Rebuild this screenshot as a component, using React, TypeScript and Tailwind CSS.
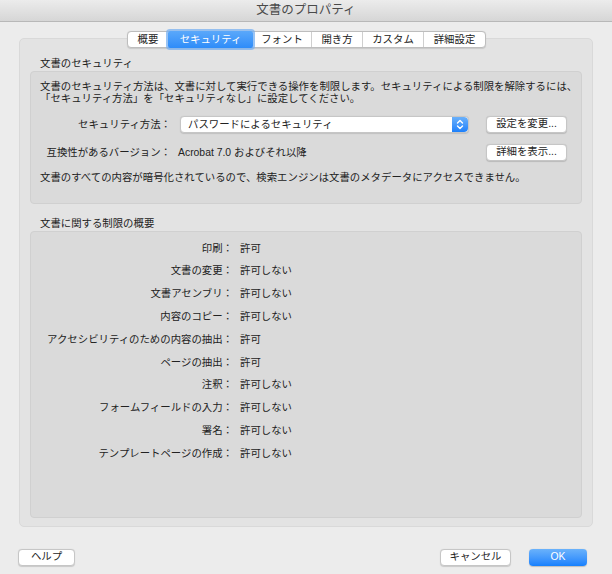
const font = { fontFamily: '"Liberation Sans", "Noto Sans CJK JP", sans-serif' };

const tabs = [
  { label: "概要", w: "w-[40px]" },
  { label: "セキュリティ", w: "w-[85px]", active: true },
  { label: "フォント", w: "w-[58px]" },
  { label: "開き方", w: "w-[51px]" },
  { label: "カスタム", w: "w-[61px]" },
  { label: "詳細設定", w: "w-[62px]" },
];

const restrictions: [string, string][] = [
  ["印刷：", "許可"],
  ["文書の変更：", "許可しない"],
  ["文書アセンブリ：", "許可しない"],
  ["内容のコピー：", "許可しない"],
  ["アクセシビリティのための内容の抽出：", "許可"],
  ["ページの抽出：", "許可"],
  ["注釈：", "許可しない"],
  ["フォームフィールドの入力：", "許可しない"],
  ["署名：", "許可しない"],
  ["テンプレートページの作成：", "許可しない"],
];

function PushButton({ label, w }: { label: string; w: string }) {
  return (
    <button
      type="button"
      className={`${w} h-[17px] shrink-0 rounded-[4px] bg-white border border-[#c6c6c6] shadow-[0_0.5px_1px_rgba(0,0,0,0.15)] text-[10.4px] leading-none text-[#262626] flex items-center justify-center`}
    >
      {label}
    </button>
  );
}

function Stepper() {
  return (
    <div className="w-[16px] h-full rounded-r-[4px] bg-gradient-to-b from-[#69b0fa] to-[#1b80fb] flex items-center justify-center">
      <svg width="8" height="11" viewBox="0 0 8 11" fill="none" stroke="white" strokeWidth="1.4" strokeLinecap="round" strokeLinejoin="round">
        <path d="M1.5 4 L4 1.5 L6.5 4" />
        <path d="M1.5 7 L4 9.5 L6.5 7" />
      </svg>
    </div>
  );
}

export default function App() {
  return (
    <div className="w-[612px] h-[574px] bg-[#ececec] flex flex-col text-[#222] overflow-hidden" style={font}>
      <div className="h-[22px] shrink-0 bg-gradient-to-b from-[#ececec] to-[#d6d6d6] border-b border-[#b8b8b8] flex items-center justify-center">
        <span className="text-[12.5px] text-[#4a4a4a]">文書のプロパティ</span>
      </div>

      <div className="flex flex-col px-[19px]">
        <div className="relative z-10 mt-[9px] flex justify-center pl-[1px]">
          <div className="flex h-[17px] rounded-[4px] bg-white border border-[#bdbdbd] shadow-[0_0.5px_1px_rgba(0,0,0,0.12)]">
            {tabs.map((t, i) =>
              t.active ? (
                <div
                  key={t.label}
                  className={`${t.w} -my-[1px] h-[17px] bg-gradient-to-b from-[#5aa8fa] to-[#2d8cf9] text-white text-[10.4px] flex items-center justify-center shadow-[0_0_0_2px_rgba(120,176,240,0.75)] rounded-[2px]`}
                >
                  {t.label}
                </div>
              ) : (
                <div
                  key={t.label}
                  className={`${t.w} h-full text-[10.4px] text-[#222] flex items-center justify-center ${i > 0 && !tabs[i - 1].active ? "border-l border-[#cfcfcf]" : ""}`}
                >
                  {t.label}
                </div>
              )
            )}
          </div>
        </div>

        <div className="-mt-[10px] h-[489px] rounded-[5px] bg-[#e3e3e3] border border-[#d9d9d9] px-[10px] flex flex-col">
          <div className="mt-[18px] h-[13px] pl-[10px] text-[10.4px] leading-[13px]">文書のセキュリティ</div>
          <div className="mt-[1px] h-[133px] rounded-[4px] bg-[#dadada] border border-[#d0d0d0] pl-[9px] pr-[14px] pt-[9px] flex flex-col text-[10.4px]">
            <p className="leading-[12px] whitespace-nowrap">
              文書のセキュリティ方法は、文書に対して実行できる操作を制限します。セキュリティによる制限を解除するには、
              <br />
              「セキュリティ方法」を「セキュリティなし」に設定してください。
            </p>
            <div className="mt-[11px] flex items-center h-[17px]">
              <div className="w-[131px] text-right shrink-0">セキュリティ方法：</div>
              <div className="ml-[9px] flex-1 h-[17px] flex rounded-[4px] bg-white border border-[#c6c6c6] shadow-[0_0.5px_1px_rgba(0,0,0,0.12)] overflow-hidden">
                <div className="flex-1 flex items-center pl-[7px]">パスワードによるセキュリティ</div>
                <Stepper />
              </div>
              <div className="ml-[17px]">
                <PushButton label="設定を変更..." w="w-[81px]" />
              </div>
            </div>
            <div className="mt-[11px] flex items-center h-[17px]">
              <div className="w-[131px] text-right shrink-0">互換性があるバージョン：</div>
              <div className="ml-[7px] flex-1">Acrobat 7.0 およびそれ以降</div>
              <PushButton label="詳細を表示..." w="w-[81px]" />
            </div>
            <p className="mt-[11px] leading-[12px] whitespace-nowrap">
              文書のすべての内容が暗号化されているので、検索エンジンは文書のメタデータにアクセスできません。
            </p>
          </div>

          <div className="mt-[13px] h-[13px] pl-[10px] text-[10.4px] leading-[13px]">文書に関する制限の概要</div>
          <div className="mt-[1px] h-[287px] rounded-[4px] bg-[#dadada] border border-[#d0d0d0] pt-[5px] flex flex-col text-[10.4px]">
            {restrictions.map(([k, v]) => (
              <div key={k} className="h-[22.8px] flex items-center">
                <div className="w-[202px] text-right shrink-0">{k}</div>
                <div className="ml-[7px]">{v}</div>
              </div>
            ))}
          </div>
        </div>
      </div>

      <div className="mt-[22px] flex items-center pl-[18px] pr-[25px]">
        <PushButton label="ヘルプ" w="w-[57px]" />
        <div className="flex-1" />
        <PushButton label="キャンセル" w="w-[71px]" />
        <button
          type="button"
          className="ml-[18px] w-[58px] h-[17px] rounded-[4px] bg-gradient-to-b from-[#6ab2fb] to-[#1480fd] text-white text-[10.4px] leading-none shadow-[0_0.5px_1px_rgba(0,0,0,0.2)] flex items-center justify-center"
        >
          OK
        </button>
      </div>
    </div>
  );
}
